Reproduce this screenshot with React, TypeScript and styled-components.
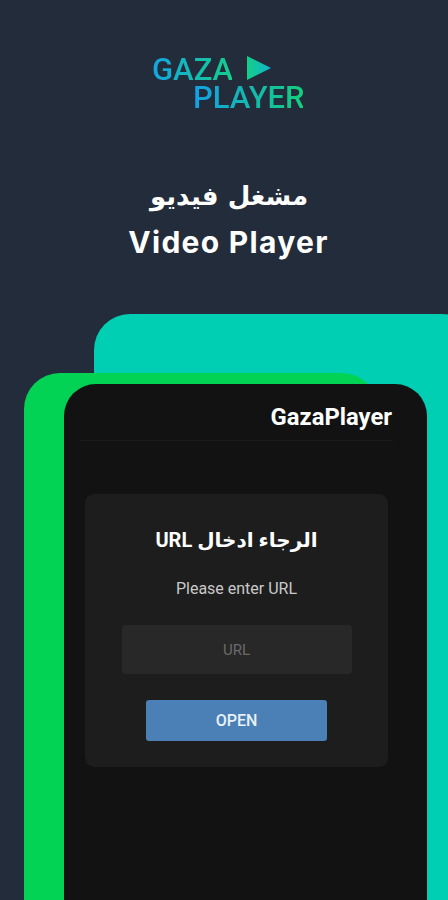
import styled, { createGlobalStyle } from "styled-components";

const GlobalStyle = createGlobalStyle`
  html, body {
    margin: 0;
    padding: 0;
    background: #232c3b;
  }
  * {
    box-sizing: border-box;
  }
`;

export default function App() {
  return (
    <Page>
      <GlobalStyle />
      <Logo>
        <LogoTop>
          <LogoWord>GAZA</LogoWord>
          <svg width="26" height="25" viewBox="0 0 26 25">
            <defs>
              <linearGradient id="playFill" x1="0" y1="0" x2="1" y2="0">
                <stop offset="0" stopColor="#13cf86" />
                <stop offset="1" stopColor="#12b5cf" />
              </linearGradient>
            </defs>
            <path d="M1 0 L25 12 L1 24 Z" fill="url(#playFill)" />
          </svg>
        </LogoTop>
        <LogoBottom>PLAYER</LogoBottom>
      </Logo>

      <ArabicHeading dir="rtl">مشغل فيديو</ArabicHeading>
      <Heading>Video Player</Heading>

      <Stage>
        <TealCard />
        <GreenCard />
        <Phone>
          <AppBar>
            <AppTitle>GazaPlayer</AppTitle>
          </AppBar>
          <Dialog>
            <DialogTitle dir="rtl">الرجاء ادخال URL</DialogTitle>
            <DialogText>Please enter URL</DialogText>
            <UrlField>URL</UrlField>
            <OpenButton>OPEN</OpenButton>
          </Dialog>
        </Phone>
      </Stage>
    </Page>
  );
}

const Page = styled.div`
  width: 448px;
  height: 900px;
  overflow: hidden;
  background: #232c3b;
  display: flex;
  flex-direction: column;
  padding-top: 56px;
`;

const Logo = styled.div`
  margin-left: 152px;
  height: 55px;
  display: flex;
  flex-direction: column;
  font-family: "Roboto", "Liberation Sans", sans-serif;
  font-size: 31px;
  font-weight: 500;
  line-height: 28px;
`;

const LogoTop = styled.div`
  display: flex;
  align-items: flex-start;
  gap: 14px;
`;

const LogoWord = styled.span`
  width: 80px;
  background: linear-gradient(90deg, #15a5e0, #13cf8c);
  -webkit-background-clip: text;
  background-clip: text;
  color: transparent;
`;

const LogoBottom = styled.span`
  margin-left: 41px;
  width: 110px;
  background: linear-gradient(90deg, #159fe6, #13cf7c);
  -webkit-background-clip: text;
  background-clip: text;
  color: transparent;
`;

const ArabicHeading = styled.div`
  margin-top: 65px;
  width: 458px;
  text-align: center;
  font-family: "DejaVu Sans", sans-serif;
  font-weight: 700;
  font-size: 26px;
  line-height: 40px;
  color: #fff;
`;

const Heading = styled.div`
  margin-top: 8px;
  width: 457px;
  text-align: center;
  font-family: "Inter", "Liberation Sans", sans-serif;
  font-weight: 700;
  font-size: 30px;
  line-height: 36px;
  letter-spacing: 1.3px;
  color: #fff;
`;

const Stage = styled.div`
  margin-top: 54px;
  flex: 1;
  display: grid;
  grid-template-columns: 448px;
  grid-template-rows: 1fr;
  overflow: hidden;
`;

const TealCard = styled.div`
  grid-area: 1 / 1;
  margin-left: 94px;
  margin-right: -30px;
  margin-bottom: -40px;
  background: #00cfb4;
  border-radius: 36px;
`;

const GreenCard = styled.div`
  grid-area: 1 / 1;
  margin-top: 59px;
  margin-left: 24px;
  margin-right: 70px;
  margin-bottom: -40px;
  background: #03d354;
  border-radius: 36px;
`;

const Phone = styled.div`
  grid-area: 1 / 1;
  margin-top: 70px;
  margin-left: 64px;
  margin-right: 21px;
  margin-bottom: -40px;
  background: #121212;
  border-radius: 32px;
  padding: 0 16px;
  display: flex;
  flex-direction: column;
`;

const AppBar = styled.div`
  height: 57px;
  margin-right: 18px;
  padding: 10px 1px 0 0;
  display: flex;
  align-items: center;
  justify-content: flex-end;
  border-bottom: 1px solid #1b1b1b;
`;

const AppTitle = styled.div`
  font-family: "Roboto", "Liberation Sans", sans-serif;
  font-weight: 700;
  font-size: 23.8px;
  color: #fff;
`;

const Dialog = styled.div`
  margin: 53px 0 0 5px;
  width: 303px;
  height: 273px;
  background: #1d1d1d;
  border-radius: 9px;
  display: flex;
  flex-direction: column;
  align-items: center;
`;

const DialogTitle = styled.div`
  margin-top: 31px;
  font-family: "Roboto", "DejaVu Sans", sans-serif;
  font-weight: 700;
  font-size: 20px;
  line-height: 30px;
  color: #fff;
`;

const DialogText = styled.div`
  margin-top: 24px;
  font-family: "Roboto", "Liberation Sans", sans-serif;
  font-size: 16px;
  line-height: 20px;
  color: #c9c9c9;
`;

const UrlField = styled.div`
  margin-top: 26px;
  width: 230px;
  height: 49px;
  background: #282828;
  border-radius: 4px;
  display: flex;
  align-items: center;
  justify-content: center;
  font-family: "Roboto", "Liberation Sans", sans-serif;
  font-size: 15px;
  color: #6a6a6a;
`;

const OpenButton = styled.div`
  margin-top: 26px;
  width: 181px;
  height: 41px;
  background: #4a80b6;
  border-radius: 3px;
  display: flex;
  align-items: center;
  justify-content: center;
  font-family: "Roboto", "Liberation Sans", sans-serif;
  font-weight: 500;
  font-size: 16px;
  color: #e8f0f7;
`;
